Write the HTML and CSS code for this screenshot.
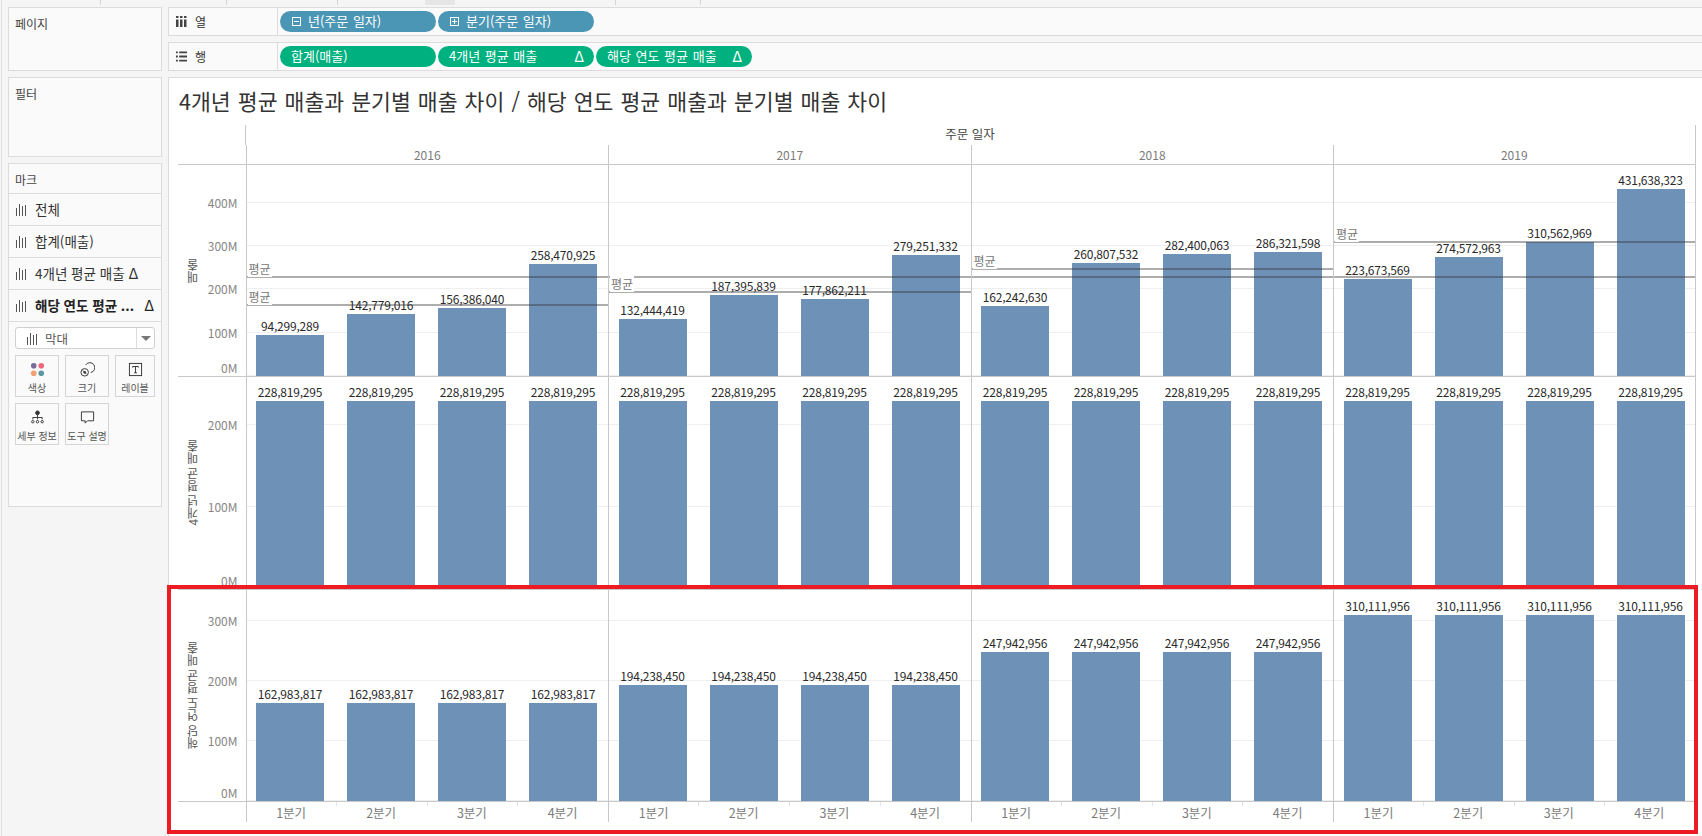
FILE: index.html
```html
<!DOCTYPE html>
<html lang="ko">
<head>
<meta charset="utf-8">
<title>Tableau</title>
<link rel="stylesheet" href="styles.css">
</head>
<body>
<div class="app">
  <div class="topstrip"><i class="ts a"></i><i class="ts b"></i><i class="ts c"></i><i class="ts d"></i><i class="ts e"></i><i class="ts f"></i></div>
  <div class="workspace">
    <aside class="side">
      <section class="card card-pages"><h2>페이지</h2></section>
      <section class="card card-filter"><h2>필터</h2></section>
      <section class="card card-marks">
        <h2 class="marks-head">마크</h2>
        <div class="mrow"><svg class="barico" viewBox="0 0 12 13"><path d="M1.500 5v8M4.500 1v12M7.500 3v10M10.500 2v11"/></svg><span>전체</span></div>
        <div class="mrow"><svg class="barico" viewBox="0 0 12 13"><path d="M1.500 5v8M4.500 1v12M7.500 3v10M10.500 2v11"/></svg><span>합계(매출)</span></div>
        <div class="mrow"><svg class="barico" viewBox="0 0 12 13"><path d="M1.500 5v8M4.500 1v12M7.500 3v10M10.500 2v11"/></svg><span>4개년 평균 매출</span><b class="delta">Δ</b></div>
        <div class="mrow active"><svg class="barico" viewBox="0 0 12 13"><path d="M1.500 5v8M4.500 1v12M7.500 3v10M10.500 2v11"/></svg><span>해당 연도 평균 ...</span><b class="delta end">Δ</b></div>
        <div class="marktype">
          <svg class="barico" viewBox="0 0 12 13"><path d="M1.500 5v8M4.500 1v12M7.500 3v10M10.500 2v11"/></svg>
          <span class="mt-text">막대</span>
          <span class="caret"></span>
        </div>
        <div class="mcards">
          <div class="mcard w44"><svg viewBox="0 0 16 16" class="mi"><circle cx="4" cy="4" r="3" fill="#7b6a9c"/><circle cx="12" cy="4" r="3" fill="#f0657a"/><circle cx="4" cy="12" r="3" fill="#f2a06f"/><circle cx="12" cy="12" r="3" fill="#5b98a3"/></svg><span>색상</span></div>
          <div class="mcard w44"><svg viewBox="0 0 16 16" class="mi line"><path d="M6 3.200A5.300 5.300 0 1 1 11.500 11.200"/><circle cx="5" cy="11" r="4"/><circle cx="5" cy="11" r="1" class="dot"/><path d="M3 9l4 4"/></svg><span>크기</span></div>
          <div class="mcard w40"><svg viewBox="0 0 16 16" class="mi line"><rect x="1.500" y="1.500" width="13" height="13"/><path d="M5 6V4.800h6V6M8 4.800v6.700M6.500 11.500h3"/></svg><span>레이블</span></div>
          <div class="mcard w44"><svg viewBox="0 0 16 16" class="mi line"><circle cx="8" cy="3" r="2" class="dot"/><path d="M8 5v5M3 10V8h10v2"/><circle cx="3" cy="12.500" r="1.300"/><circle cx="8" cy="12.500" r="1.300"/><circle cx="13" cy="12.500" r="1.300"/></svg><span>세부 정보</span></div>
          <div class="mcard w44"><svg viewBox="0 0 16 16" class="mi line"><path d="M1.500 2h13v9.500H8L5.500 14v-2.500h-4z"/></svg><span>도구 설명</span></div>
        </div>
      </section>
    </aside>
    <main class="content">
      <div class="shelf">
        <div class="shelf-label"><svg viewBox="0 0 11 11" class="shico"><path d="M0 0h2.500v2H0zM4 0h2.500v2H4zM8 0h2.500v2H8zM0 3.500h2.500V11H0zM4 3.500h2.500V11H4zM8 3.500h2.500V11H8z"/></svg><span>열</span></div>
        <div class="pills">
          <div class="pill blue"><svg viewBox="0 0 9 9" class="pm"><rect x=".5" y=".5" width="8" height="8"/><path d="M2 4.500h5"/></svg><span>년(주문 일자)</span></div>
          <div class="pill blue"><svg viewBox="0 0 9 9" class="pm"><rect x=".5" y=".5" width="8" height="8"/><path d="M2 4.500h5M4.500 2v5"/></svg><span>분기(주문 일자)</span></div>
        </div>
      </div>
      <div class="shelf">
        <div class="shelf-label"><svg viewBox="0 0 12 11" class="shico"><path d="M0 0h2v2H0zM3.500 0H12v2H3.500zM0 4.500h2v2H0zM3.500 4.500H12v2H3.500zM0 9h2v2H0zM3.500 9H12v2H3.500z"/></svg><span>행</span></div>
        <div class="pills">
          <div class="pill green"><span>합계(매출)</span></div>
          <div class="pill green"><span>4개년 평균 매출</span><b class="pd">Δ</b></div>
          <div class="pill green"><span>해당 연도 평균 매출</span><b class="pd">Δ</b></div>
        </div>
      </div>
      <div class="viz">
        <h1 class="title">4개년 평균 매출과 분기별 매출 차이 / 해당 연도 평균 매출과 분기별 매출 차이</h1>
        <div class="chart">
          <div class="corner"></div>
          <div class="head-top">주문 일자</div>
          <div class="corner2"></div>
          <div class="year">2016</div><div class="year">2017</div><div class="year">2018</div><div class="year">2019</div>

          <div class="axis r1"><span class="axt">매출</span><div class="ticks"><span class="tick zero">0M</span><span class="tick">100M</span><span class="tick">200M</span><span class="tick">300M</span><span class="tick">400M</span></div></div>
          <div class="pane r1">
            <div class="slot"><em>94,299,289</em><i style="height:40.8px"></i></div>
            <div class="slot"><em>142,779,016</em><i style="height:61.8px"></i></div>
            <div class="slot"><em>156,386,040</em><i style="height:67.7px"></i></div>
            <div class="slot"><em>258,470,925</em><i style="height:111.9px"></i></div>
            <div class="ref" style="bottom:98px"><span>평균</span></div>
            <div class="ref" style="bottom:69.6px"><span>평균</span></div>
          </div>
          <div class="pane r1">
            <div class="slot"><em>132,444,419</em><i style="height:57.3px"></i></div>
            <div class="slot"><em>187,395,839</em><i style="height:81.1px"></i></div>
            <div class="slot"><em>177,862,211</em><i style="height:77px"></i></div>
            <div class="slot"><em>279,251,332</em><i style="height:120.9px"></i></div>
            <div class="ref" style="bottom:98px"></div>
            <div class="ref" style="bottom:83.1px"><span>평균</span></div>
          </div>
          <div class="pane r1">
            <div class="slot"><em>162,242,630</em><i style="height:70.3px"></i></div>
            <div class="slot"><em>260,807,532</em><i style="height:112.9px"></i></div>
            <div class="slot"><em>282,400,063</em><i style="height:122.3px"></i></div>
            <div class="slot"><em>286,321,598</em><i style="height:124px"></i></div>
            <div class="ref" style="bottom:98px"></div>
            <div class="ref" style="bottom:106.4px"><span>평균</span></div>
          </div>
          <div class="pane r1 last">
            <div class="slot"><em>223,673,569</em><i style="height:96.9px"></i></div>
            <div class="slot"><em>274,572,963</em><i style="height:118.9px"></i></div>
            <div class="slot"><em>310,562,969</em><i style="height:134.5px"></i></div>
            <div class="slot"><em>431,638,323</em><i style="height:186.9px"></i></div>
            <div class="ref" style="bottom:98px"></div>
            <div class="ref" style="bottom:133.3px"><span>평균</span></div>
          </div>

          <div class="axis r2"><span class="axt">4개년 평균 매출</span><div class="ticks"><span class="tick zero">0M</span><span class="tick">100M</span><span class="tick">200M</span></div></div>
          <div class="pane r2">
            <div class="slot"><em>228,819,295</em><i style="height:187.6px"></i></div>
            <div class="slot"><em>228,819,295</em><i style="height:187.6px"></i></div>
            <div class="slot"><em>228,819,295</em><i style="height:187.6px"></i></div>
            <div class="slot"><em>228,819,295</em><i style="height:187.6px"></i></div>
          </div>
          <div class="pane r2">
            <div class="slot"><em>228,819,295</em><i style="height:187.6px"></i></div>
            <div class="slot"><em>228,819,295</em><i style="height:187.6px"></i></div>
            <div class="slot"><em>228,819,295</em><i style="height:187.6px"></i></div>
            <div class="slot"><em>228,819,295</em><i style="height:187.6px"></i></div>
          </div>
          <div class="pane r2">
            <div class="slot"><em>228,819,295</em><i style="height:187.6px"></i></div>
            <div class="slot"><em>228,819,295</em><i style="height:187.6px"></i></div>
            <div class="slot"><em>228,819,295</em><i style="height:187.6px"></i></div>
            <div class="slot"><em>228,819,295</em><i style="height:187.6px"></i></div>
          </div>
          <div class="pane r2 last">
            <div class="slot"><em>228,819,295</em><i style="height:187.6px"></i></div>
            <div class="slot"><em>228,819,295</em><i style="height:187.6px"></i></div>
            <div class="slot"><em>228,819,295</em><i style="height:187.6px"></i></div>
            <div class="slot"><em>228,819,295</em><i style="height:187.6px"></i></div>
          </div>

          <div class="axis r3"><span class="axt">해당 연도 평균 매출</span><div class="ticks"><span class="tick zero">0M</span><span class="tick">100M</span><span class="tick">200M</span><span class="tick">300M</span></div></div>
          <div class="pane r3">
            <div class="slot"><em>162,983,817</em><i style="height:97.8px"></i></div>
            <div class="slot"><em>162,983,817</em><i style="height:97.8px"></i></div>
            <div class="slot"><em>162,983,817</em><i style="height:97.8px"></i></div>
            <div class="slot"><em>162,983,817</em><i style="height:97.8px"></i></div>
          </div>
          <div class="pane r3">
            <div class="slot"><em>194,238,450</em><i style="height:116.5px"></i></div>
            <div class="slot"><em>194,238,450</em><i style="height:116.5px"></i></div>
            <div class="slot"><em>194,238,450</em><i style="height:116.5px"></i></div>
            <div class="slot"><em>194,238,450</em><i style="height:116.5px"></i></div>
          </div>
          <div class="pane r3">
            <div class="slot"><em>247,942,956</em><i style="height:148.8px"></i></div>
            <div class="slot"><em>247,942,956</em><i style="height:148.8px"></i></div>
            <div class="slot"><em>247,942,956</em><i style="height:148.8px"></i></div>
            <div class="slot"><em>247,942,956</em><i style="height:148.8px"></i></div>
          </div>
          <div class="pane r3 last">
            <div class="slot"><em>310,111,956</em><i style="height:186.1px"></i></div>
            <div class="slot"><em>310,111,956</em><i style="height:186.1px"></i></div>
            <div class="slot"><em>310,111,956</em><i style="height:186.1px"></i></div>
            <div class="slot"><em>310,111,956</em><i style="height:186.1px"></i></div>
          </div>

          <div class="corner3"></div>
          <div class="qs"><span>1분기</span><span>2분기</span><span>3분기</span><span>4분기</span></div>
          <div class="qs"><span>1분기</span><span>2분기</span><span>3분기</span><span>4분기</span></div>
          <div class="qs"><span>1분기</span><span>2분기</span><span>3분기</span><span>4분기</span></div>
          <div class="qs last"><span>1분기</span><span>2분기</span><span>3분기</span><span>4분기</span></div>
        </div>
        <div class="redbox"></div>
      </div>
    </main>
  </div>
</div>
</body>
</html>
```
FILE: styles.css
```css
* { box-sizing: border-box; }
html, body { margin: 0; padding: 0; }
body {
  width: 1702px;
  height: 836px;
  overflow: hidden;
  background: #f5f5f5;
  font-family: "Noto Sans CJK KR", "Noto Sans", sans-serif;
  color: #444;
  font-size: 12px;
}
.app { height: 836px; margin-left: 1px; border-left: 1px solid #e0e0e0; }

.topstrip { height: 5px; display: flex; }
.ts { display: block; height: 5px; border-right: 1px solid #d4d4d4; }
.ts.a { width: 99px; }
.ts.b { width: 126px; }
.ts.c { width: 111px; }
.ts.d { width: 87px; border-right: 0; }
.ts.e { width: 30px; background: #e6e6e6; border-right: 0; margin-right: 160px; }
.ts.f { width: 86px; border-left: 1px solid #d4d4d4; }

.workspace {
  display: grid;
  grid-template-columns: 154px 1fr;
  column-gap: 6px;
  padding: 2px 0 0 6px;
}

.side { display: flex; flex-direction: column; gap: 6px; }
.card { background: #fafafa; border: 1px solid #dcdcdc; }
.card h2 { margin: 0; font-weight: 400; font-size: 12px; line-height: 16px; color: #444; }
.card-pages { height: 64px; padding: 8px 6px; }
.card-filter { height: 80px; padding: 8px 6px; }
.card-marks { height: 344px; display: flex; flex-direction: column; }
.marks-head.marks-head { height: 30px; line-height: 31px; padding-left: 6px; border-bottom: 1px solid #dcdcdc; }
.mrow {
  height: 32px;
  display: flex;
  align-items: center;
  padding: 0 0 1px 6px;
  border-bottom: 1px solid #dcdcdc;
  font-size: 13.5px;
  line-height: 20px;
  color: #333;
  white-space: nowrap;
}
.mrow span { margin-left: 8px; }
.mrow.active { font-weight: 700; color: #222; }
.barico { width: 12px; height: 13px; flex: none; }
.barico path { stroke: #555; stroke-width: 1; fill: none; }
.delta { font-weight: 400; margin-left: 4px; font-size: 15px; line-height: 20px; }
.delta.end { margin-left: auto; margin-right: 7px; }

.marktype {
  margin: 5px 6px 0;
  height: 22px;
  background: #fff;
  border: 1px solid #d0d0d0;
  border-radius: 3px;
  display: flex;
  align-items: center;
  padding-left: 10px;
  color: #555;
}
.mt-text { margin-left: 7px; font-size: 12.5px; }
.caret {
  margin-left: auto;
  width: 18px;
  height: 20px;
  border-left: 1px solid #dcdcdc;
  position: relative;
}
.caret::after {
  content: "";
  position: absolute;
  left: 4px;
  top: 8px;
  border: 5px solid transparent;
  border-top: 5px solid #777;
  border-bottom: 0;
}
.mcards {
  margin: 6px 6px 0;
  display: flex;
  flex-wrap: wrap;
  gap: 6px;
}
.mcard {
  height: 42px;
  border: 1px solid #d4d4d4;
  display: flex;
  flex-direction: column;
  align-items: center;
  padding-top: 6px;
  color: #555;
  font-size: 10px;
  line-height: 14px;
  white-space: nowrap;
}
.mcard span { margin-top: 4px; }
.w44 { width: 44px; }
.w40 { width: 40px; }
.mi { width: 15px; height: 15px; flex: none; }
.mi.line * { fill: none; stroke: #333; stroke-width: 1; }
.mi.line .dot { fill: #333; }

.content { min-width: 0; display: flex; flex-direction: column; }
.shelf {
  height: 29px;
  margin-bottom: 6px;
  display: flex;
  background: #fafafa;
  border: 1px solid #dcdcdc;
  border-right: 0;
}
.shelf-label {
  width: 109px;
  flex: none;
  border-right: 1px solid #dcdcdc;
  display: flex;
  align-items: center;
  padding-left: 7px;
  color: #333;
  font-size: 12px;
}
.shico { width: 11px; height: 11px; fill: #444; flex: none; }
.shelf-label span { margin-left: 8px; }
.pills { display: flex; align-items: center; gap: 2px; padding-left: 2px; }
.pill {
  width: 156px;
  height: 21px;
  border-radius: 10.5px;
  display: flex;
  align-items: center;
  padding: 0 10px 1px 11px;
  color: #fff;
  font-size: 13px;
  line-height: 18px;
  word-spacing: 1px;
  white-space: nowrap;
}
.blue { background: #4b96b5; }
.green { background: #00b180; }
.pm { width: 9px; height: 9px; flex: none; margin: 1px 7px 0 1px; }
.pm * { fill: none; stroke: #fff; stroke-width: 1; }
.pd { font-weight: 400; margin-left: auto; font-size: 15px; }

.viz {
  height: 765px;
  background: #fff;
  border: 1px solid #dcdcdc;
  border-right: 0;
  position: relative;
  padding-left: 9px;
}
.title {
  margin: 0;
  height: 47px;
  padding: 8px 0 0 1px;
  font-size: 21.6px;
  line-height: 30px;
  word-spacing: 1px;
  font-weight: 400;
  color: #333;
  white-space: nowrap;
}
.chart {
  display: grid;
  grid-template-columns: 67.5px repeat(4, 362.5px);
  grid-template-rows: 20px 20px 212px 213px 212px 20px;
}
.corner { grid-column: 1; border-right: 1px solid #c8c8c8; }
.head-top {
  grid-column: 2 / 6;
  text-align: center;
  line-height: 18px;
  font-size: 12.5px;
  color: #444;
  border-right: 1px solid #c8c8c8;
}
.corner2 { border-bottom: 1px solid #c8c8c8; }
.year {
  border-left: 1px solid #c8c8c8;
  border-bottom: 1px solid #c8c8c8;
  text-align: center;
  line-height: 19px;
  color: #7b7b7b;
  font-size: 12px;
}
.year:nth-child(7) { border-right: 1px solid #c8c8c8; }

.axis {
  display: flex;
  align-items: stretch;
  border-bottom: 1px solid #c8c8c8;
  padding: 0 8px 0 7px;
}
.axt {
  writing-mode: vertical-rl;
  transform: rotate(180deg);
  align-self: center;
  font-size: 12px;
  line-height: 16px;
  color: #555;
  white-space: nowrap;
}
.ticks {
  margin-left: auto;
  display: flex;
  flex-direction: column-reverse;
  align-items: flex-end;
}
.tick { height: 16px; line-height: 16px; color: #868686; font-size: 12px; }
.tick.zero { margin-top: -8px; }
.r1 .ticks { row-gap: 27.3px; }
.r2 .ticks { row-gap: 66px; }
.r3 .ticks { row-gap: 44px; }

.pane {
  position: relative;
  display: flex;
  align-items: flex-end;
  padding-left: 9.5px;
  column-gap: 23px;
  border-left: 1px solid #c8c8c8;
  border-bottom: 1px solid #c8c8c8;
}
.pane.r1 { background-image: repeating-linear-gradient(to top, #efefef 0 1px, transparent 1px 43.3px); }
.pane.r2 { background-image: repeating-linear-gradient(to top, #efefef 0 1px, transparent 1px 82px); }
.pane.r3 { background-image: repeating-linear-gradient(to top, #efefef 0 1px, transparent 1px 60px); }
.pane.last, .qs.last { border-right: 1px solid #c8c8c8; }
.slot { width: 68px; flex: none; display: flex; flex-direction: column; align-items: center; }
.slot em {
  font-style: normal;
  font-size: 12px;
  letter-spacing: -.2px;
  line-height: 16px;
  margin-bottom: 1px;
  color: #2a2a2a;
  white-space: nowrap;
}
.slot i { display: block; width: 68px; background: #6e92b7; }
.ref { position: absolute; left: 0; right: 0; height: 2px; background: rgba(50, 50, 50, .4); }
.ref span {
  position: absolute;
  left: 1px;
  bottom: 1px;
  padding: 0 1px;
  background: #fff;
  font-size: 12px;
  line-height: 16px;
  color: #777;
}

.qs { display: flex; border-left: 1px solid #c8c8c8; }
.qs span {
  width: 91px;
  text-align: center;
  line-height: 20px;
  padding-top: 1px;
  color: #7b7b7b;
  font-size: 12.5px;
  position: relative;
}
.qs span:first-child { width: 89.5px; }
.qs span + span::before {
  content: "";
  position: absolute;
  left: 0;
  top: 0;
  height: 4px;
  border-left: 1px solid #e4e4e4;
}

.redbox {
  position: absolute;
  left: -2px;
  top: 507px;
  width: 1531px;
  height: 249px;
  border: 4px solid #ed1c24;
  pointer-events: none;
}
```
